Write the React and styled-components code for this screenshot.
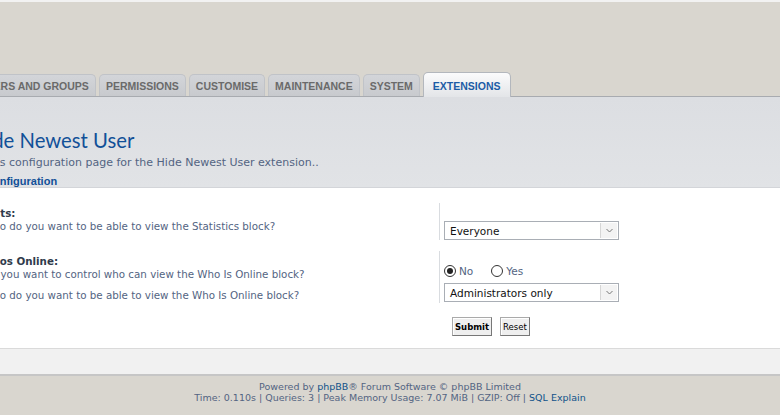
import React, { useState } from "react";
import styled, { createGlobalStyle } from "styled-components";

const GlobalStyle = createGlobalStyle`
  html, body {
    margin: 0;
    padding: 0;
    background: #d9d6cf;
    overflow: hidden;
  }
  body {
    font-family: "DejaVu Sans", Verdana, sans-serif;
    font-size: 10.3px;
    color: #536482;
  }
`;

const Page = styled.div`
  width: 780px;
  height: 415px;
  border-top: 2px solid #f2f2f2;
  box-sizing: border-box;
  display: flex;
  flex-direction: column;
`;

const Header = styled.div`
  padding-top: 70px;
`;

const TabBar = styled.ul`
  list-style: none;
  margin: 0 0 0 -28px;
  padding: 0;
  height: 24px;
  display: flex;
  align-items: flex-end;
  gap: 3px;
  border-bottom: 1px solid #a8abb0;
`;

const Tab = styled.li`
  box-sizing: border-box;
  height: ${(p) => (p.active ? "25px" : "22px")};
  margin-bottom: ${(p) => (p.active ? "-1px" : "0")};
  padding: ${(p) => (p.active ? "2px 9px 0" : "0 6px")};
  display: flex;
  align-items: center;
  border: 1px solid ${(p) => (p.active ? "#b3b7bd" : "#c0c3c8")};
  border-bottom: none;
  border-radius: 5px 5px 0 0;
  background: ${(p) =>
    p.active
      ? "linear-gradient(to bottom, #fbfbfc 0%, #e3e5e8 100%)"
      : "linear-gradient(to bottom, #d3d5d9 0%, #c8cace 100%)"};
  font-family: "Liberation Sans", Arial, sans-serif;
  font-weight: bold;
  font-size: 10.5px;
  color: ${(p) => (p.active ? "#1c5ca6" : "#6a6a6a")};
  white-space: nowrap;
`;

const Main = styled.div`
  background: linear-gradient(to bottom, #dcdee2 0%, #e1e3e6 100%);
  padding-top: 31px;
  border-bottom: 1px solid #d3d5d9;
`;

const Title = styled.h1`
  margin: 0 0 0 -28px;
  font-family: Lato, "Open Sans", sans-serif;
  font-weight: normal;
  font-size: 20.3px;
  line-height: 24px;
  color: #115098;
`;

const Intro = styled.p`
  margin: 4px 0 0 -17px;
  font-size: 11px;
  line-height: 13px;
  color: #536482;
`;

const Legend = styled.div`
  margin: 7px 0 0 -15px;
  font-family: "Liberation Sans", Arial, sans-serif;
  font-weight: bold;
  font-size: 11px;
  line-height: 11px;
  color: #115098;
`;

const Panel = styled.div`
  background: #fff;
  padding: 15px 0 12px;
  border-bottom: 1px solid #dadada;
  display: flex;
  flex-direction: column;
`;

const Group = styled.div`
  display: flex;
  flex-direction: column;
  margin-top: ${(p) => p.gap || "0"};
`;

const Row = styled.div`
  display: grid;
  grid-template-columns: 456px 1fr;
  margin-left: -17px;
  height: ${(p) => p.h};
`;

const Term = styled.div`
  padding-top: ${(p) => p.top || "4px"};
  line-height: 13px;
`;

const Label = styled.div`
  margin-left: -2px;
  font-weight: bold;
  color: #303b4c;
`;

const Explain = styled.div`
  color: #536482;
`;

const Desc = styled.div`
  border-left: 1px solid #d9dce0;
  padding: 0 0 ${(p) => p.bottom || "0"} 4px;
  display: flex;
  flex-direction: column;
  justify-content: flex-end;
`;

const Select = styled.div`
  box-sizing: border-box;
  width: 175px;
  height: 19px;
  border: 1px solid #a9aeb5;
  background: #fff;
  display: flex;
  align-items: stretch;
  font-size: 10.5px;
  color: #111;
`;

const SelectValue = styled.div`
  flex: 1;
  padding-left: 5px;
  display: flex;
  align-items: center;
`;

const SelectArrow = styled.div`
  width: 16px;
  margin: 1px;
  background: #f3f3f3;
  border-left: 1px solid #d6d6d6;
  display: flex;
  align-items: center;
  justify-content: center;
`;

const Radios = styled.div`
  display: flex;
  align-items: center;
  gap: 18px;
  height: 12px;
`;

const RadioLabel = styled.label`
  display: flex;
  align-items: center;
  gap: 3px;
  color: #536482;
  font-size: 10.5px;
  cursor: pointer;
`;

const RadioDot = styled.span`
  box-sizing: border-box;
  width: 12px;
  height: 12px;
  border-radius: 50%;
  border: 1px solid #333;
  background: #fff;
  display: flex;
  align-items: center;
  justify-content: center;
  &::after {
    content: "";
    width: 6px;
    height: 6px;
    border-radius: 50%;
    background: ${(p) => (p.checked ? "#222" : "transparent")};
  }
`;

const Buttons = styled.div`
  display: flex;
  gap: 8px;
  margin-top: 14px;
  padding-left: 452px;
`;

const Button = styled.button`
  box-sizing: border-box;
  height: 19px;
  padding: 0 2px;
  border: 1px solid #777;
  border-top-color: #aaa;
  border-left-color: #aaa;
  background: #efefef;
  font-family: "DejaVu Sans", Verdana, sans-serif;
  font-size: 8.5px;
  font-weight: ${(p) => (p.primary ? "bold" : "normal")};
  color: #000;
  box-shadow: inset 1px 1px 0 #fff;
`;

const SubBar = styled.div`
  height: 25px;
  background: #f1f1f1;
  border-bottom: 2px solid #c6c6c6;
`;

const Footer = styled.div`
  padding-top: 5px;
  text-align: center;
  font-size: 9.5px;
  line-height: 11px;
  color: #536482;
`;

const Link = styled.a`
  color: #105289;
  text-decoration: none;
`;

const Chevron = () => (
  <svg width="7" height="5" viewBox="0 0 7 5">
    <path d="M0.5 1 L3.5 4 L6.5 1" fill="none" stroke="#777" strokeWidth="1" />
  </svg>
);

const tabs = [
  "Users and groups",
  "Permissions",
  "Customise",
  "Maintenance",
  "System",
  "Extensions",
];

function FakeSelect({ value }) {
  return (
    <Select>
      <SelectValue>{value}</SelectValue>
      <SelectArrow>
        <Chevron />
      </SelectArrow>
    </Select>
  );
}

export default function App() {
  const [control, setControl] = useState("no");

  return (
    <>
      <GlobalStyle />
      <Page>
        <Header>
          <TabBar>
            {tabs.map((t) => (
              <Tab key={t} active={t === "Extensions"}>
                {t.toUpperCase()}
              </Tab>
            ))}
          </TabBar>
        </Header>
        <Main>
          <Title>Hide Newest User</Title>
          <Intro>This configuration page for the Hide Newest User extension..</Intro>
          <Legend>Configuration</Legend>
        </Main>
        <Panel>
          <Row h="37px">
            <Term>
              <Label>Stats:</Label>
              <Explain>Who do you want to be able to view the Statistics block?</Explain>
            </Term>
            <Desc>
              <FakeSelect value="Everyone" />
            </Desc>
          </Row>
          <Group gap="11px">
            <Row h="30px">
              <Term top="4px">
                <Label>Whos Online:</Label>
                <Explain>Do you want to control who can view the Who Is Online block?</Explain>
              </Term>
              <Desc bottom="4px">
                <Radios>
                  <RadioLabel onClick={() => setControl("no")}>
                    <RadioDot checked={control === "no"} />
                    No
                  </RadioLabel>
                  <RadioLabel onClick={() => setControl("yes")}>
                    <RadioDot checked={control === "yes"} />
                    Yes
                  </RadioLabel>
                </Radios>
              </Desc>
            </Row>
            <Row h="22px">
              <Term top="8px">
                <Explain>Who do you want to be able to view the Who Is Online block?</Explain>
              </Term>
              <Desc bottom="1px">
                <FakeSelect value="Administrators only" />
              </Desc>
            </Row>
          </Group>
          <Buttons>
            <Button primary>Submit</Button>
            <Button>Reset</Button>
          </Buttons>
        </Panel>
        <SubBar />
        <Footer>
          Powered by <Link href="#">phpBB</Link>® Forum Software © phpBB Limited
          <br />
          Time: 0.110s | Queries: 3 | Peak Memory Usage: 7.07 MiB | GZIP: Off |{" "}
          <Link href="#">SQL Explain</Link>
        </Footer>
      </Page>
    </>
  );
}
